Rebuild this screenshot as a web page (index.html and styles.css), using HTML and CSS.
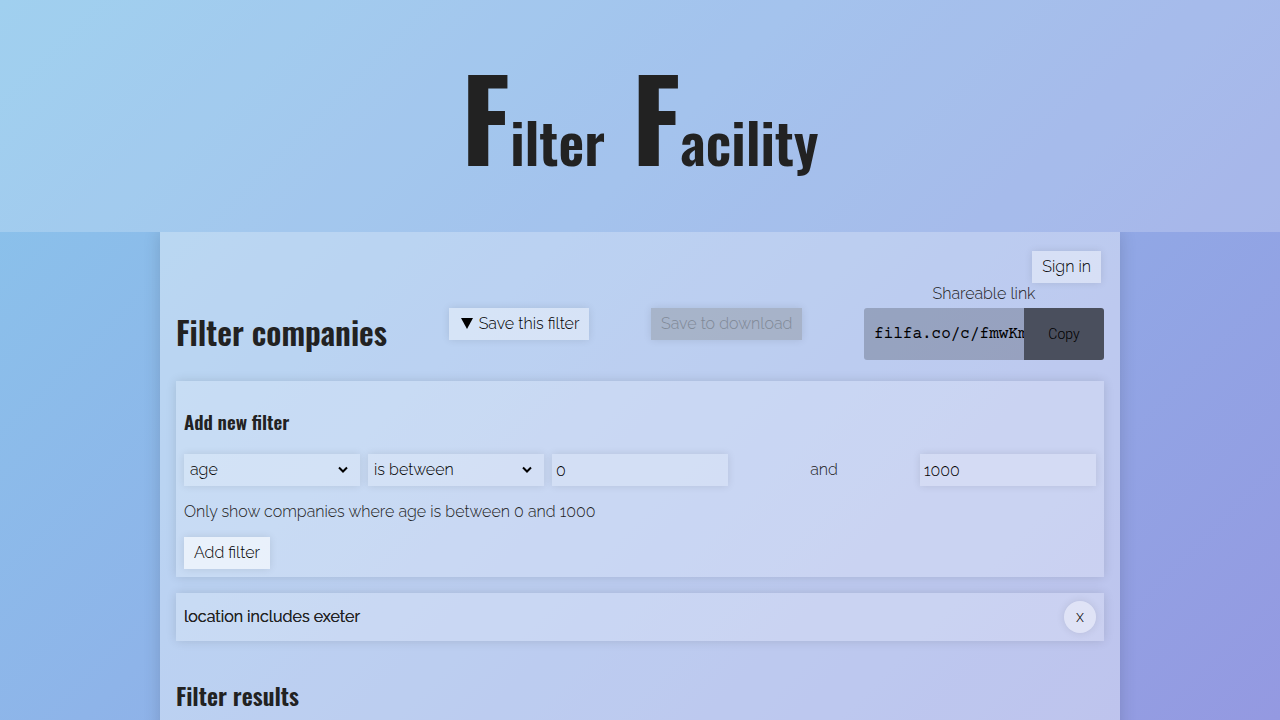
FILE: index.html
```html
<!DOCTYPE html>
<html lang="en">
<head>
<meta charset="utf-8">
<title>Filter Facility</title>
<link rel="stylesheet" href="styles.css">
</head>
<body>
<header class="banner">
  <h1 class="brand"><span class="word">Filter</span> <span class="word">Facility</span></h1>
</header>
<main class="panel">
  <div class="account"><button class="button" type="button">Sign in</button></div>
  <section class="toolbar">
    <h2 class="title">Filter companies</h2>
    <div class="action"><button class="button" type="button"><svg class="arrow" width="12" height="12" viewBox="0 0 12 12" aria-hidden="true"><path d="M0 1h12L6 12z"/></svg>Save this filter</button></div>
    <div class="action"><button class="button" type="button" disabled>Save to download</button></div>
    <div class="share">
      <label for="link">Shareable link</label>
      <div class="share-row">
        <input class="share-link" id="link" type="text" value="filfa.co/c/fmwKmq" readonly>
        <button class="copy" type="button">Copy</button>
      </div>
    </div>
  </section>
  <section class="card">
    <h4 class="subtitle">Add new filter</h4>
    <div class="fields">
      <div class="picker">
        <select class="field" aria-label="Property"><option>age</option></select>
        <svg class="chevron" width="12" height="8" viewBox="0 0 12 8" aria-hidden="true"><path d="M2 1.5l4 4 4-4"/></svg>
      </div>
      <div class="picker">
        <select class="field" aria-label="Comparison"><option>is between</option></select>
        <svg class="chevron" width="12" height="8" viewBox="0 0 12 8" aria-hidden="true"><path d="M2 1.5l4 4 4-4"/></svg>
      </div>
      <input class="field" type="text" value="0" aria-label="Minimum">
      <span class="joiner">and</span>
      <input class="field" type="text" value="1000" aria-label="Maximum">
    </div>
    <p class="summary">Only show companies where age is between 0 and 1000</p>
    <button class="button button-strong" type="button">Add filter</button>
  </section>
  <section class="card applied">
    <strong class="rule">location includes exeter</strong>
    <button class="remove" type="button" aria-label="Remove filter">x</button>
  </section>
  <h3 class="results">Filter results</h3>
</main>
</body>
</html>
```
FILE: styles.css
```css
* { box-sizing: border-box; }
body {
  margin: 0;
  height: 100vh;
  overflow: hidden;
  color: #222;
  background: linear-gradient(135deg, #89c5eb, #8eb4e9 40%, #9499e1);
  font: 300 16px/24px Raleway, Lato, sans-serif;
  font-variant-numeric: oldstyle-nums;
}
button, input, select { font: inherit; font-variant-numeric: inherit; color: #000; border: 0; border-radius: 0; }
h1, h2, h3, h4, .word {
  margin: 0;
  font-family: Oswald, "Liberation Sans Narrow", sans-serif;
  font-weight: 600;
}
.banner {
  padding: 47px 16px 23px;
  background: rgba(255, 255, 255, .2);
}
.brand { font-size: 56px; line-height: 136px; text-align: center; }
.word { display: inline-block; }
.word::first-letter { font-size: 112px; font-weight: 700; line-height: 136px; }
.word + .word { margin-left: 13px; }
.panel {
  max-width: 960px;
  min-height: 100vh;
  margin: 0 auto;
  padding: 16px;
  background: rgba(255, 255, 255, .4);
  box-shadow: 0 0 16px rgba(0, 0, 0, .15);
  clip-path: inset(0 -24px -24px);
}
.button {
  height: 32px;
  padding: 0 10px;
  background: rgba(255, 255, 255, .4);
  box-shadow: 0 0 8px rgba(0, 0, 0, .1);
}
.button:disabled { color: #808997; background: rgba(128, 128, 128, .35); }
.button-strong { background: rgba(255, 255, 255, .6); }
.arrow { margin: 0 6px 0 2px; }
.account { display: flex; justify-content: flex-end; padding: 3px 3px 0 0; }
.toolbar { display: flex; justify-content: space-between; }
.title { padding-top: 25px; font-size: 32px; line-height: 48px; white-space: nowrap; }
.action { padding-top: 25px; }
.share { width: 240px; text-align: center; line-height: 21px; }
.share label { display: block; padding-bottom: 4px; }
.share-row { display: flex; height: 52px; border-radius: 3px; overflow: hidden; }
.share-link {
  flex: 1;
  min-width: 0;
  padding: 0 0 0 10px;
  background: rgba(0, 0, 0, .2);
  font: 400 16px "Courier Prime", "Cutive Mono", "Nimbus Mono PS", Courier, monospace;
}
.copy {
  width: 80px;
  background: #4a4f5d;
  font: 300 14px Roboto, sans-serif;
}
.card {
  margin-top: 21px;
  padding: 8px;
  background: rgba(255, 255, 255, .2);
  box-shadow: 0 0 10px rgba(0, 0, 0, .12);
}
.subtitle { padding: 19px 0; font-size: 19px; line-height: 27px; }
.fields { display: grid; grid-template-columns: repeat(5, 1fr); gap: 8px; }
.field {
  width: 100%;
  height: 32px;
  padding: 0 4px;
  background: rgba(255, 255, 255, .2);
  box-shadow: 0 0 8px rgba(0, 0, 0, .1);
}
.picker { position: relative; }
.picker .field { display: block; padding: 0 6px; appearance: none; }
.chevron { position: absolute; right: 11px; top: 12px; fill: none; stroke: #000; stroke-width: 2; pointer-events: none; }
.joiner { line-height: 32px; text-align: center; }
.summary { margin: 14px 0 13px; }
.applied { display: flex; justify-content: space-between; align-items: center; margin-top: 16px; }
.rule { font-weight: 400; text-shadow: 0 0 currentColor; }
.remove {
  width: 32px;
  height: 32px;
  padding: 0;
  border-radius: 50%;
  background: rgba(255, 255, 255, .4);
  box-shadow: 0 0 8px rgba(0, 0, 0, .1);
}
.results { padding-top: 34px; font-size: 24px; line-height: 40px; }
```
